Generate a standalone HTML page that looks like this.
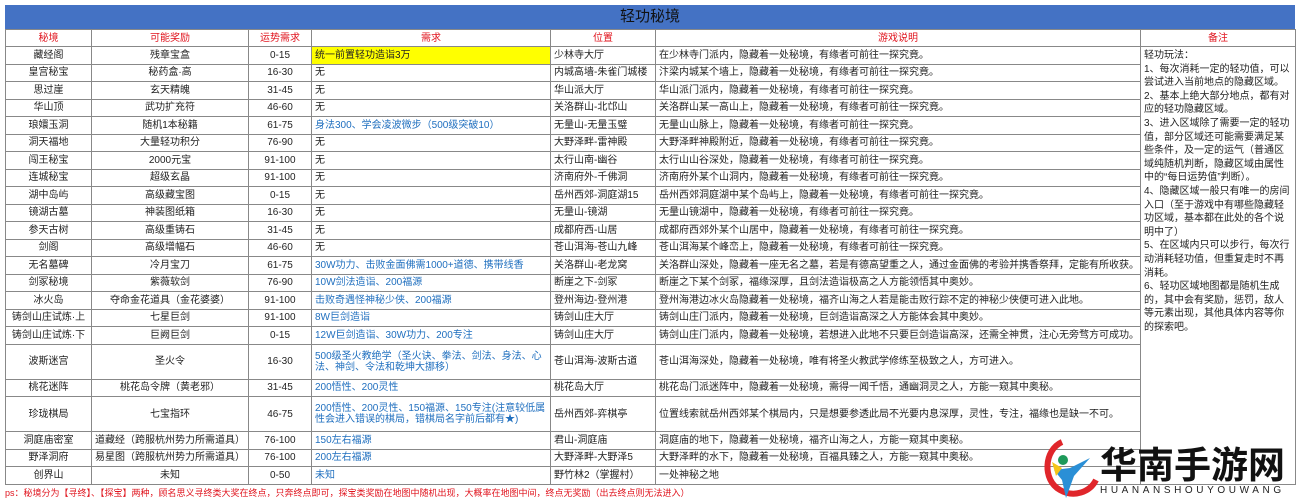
<!DOCTYPE html>
<html><head><meta charset="utf-8"><style>
body{margin:0;width:1299px;height:500px;background:#fff;overflow:hidden;font-family:"Liberation Sans","Noto Sans CJK SC",sans-serif;position:relative}
.title{position:absolute;left:5px;top:5px;width:1290px;height:24px;background:#4472c4;color:#111;font-size:15px;line-height:24px;text-align:center}
table{position:absolute;left:5px;top:29px;border-collapse:collapse;table-layout:fixed;width:1290px;font-size:10px;color:#222}
td{border:1px solid #888;padding:0 3px;height:16.5px;line-height:11px;white-space:nowrap;overflow:hidden}
tr.h td{color:#e0141e;text-align:center;height:16px}
tr.d td{height:34px;white-space:normal}
td.c{text-align:center}
.b{color:#1f6fbf}
.y{background:#ffff00}
td.n{vertical-align:top;white-space:normal;line-height:13.6px;padding:2px 3px;background:#fff}
.ps{position:absolute;left:5px;top:486px;font-size:9px;color:#e0141e}
.logo{position:absolute;left:1100px;top:440px;font-size:37px;font-weight:bold;color:#111;white-space:nowrap;font-family:"Noto Sans CJK SC",sans-serif;line-height:44px}
.en{position:absolute;left:1100px;top:485px;font-size:10px;letter-spacing:3.6px;color:#222;white-space:nowrap}
</style></head><body>
<div class="title">轻功秘境</div>
<table>
<colgroup><col style="width:86px"><col style="width:157px"><col style="width:63px"><col style="width:239px"><col style="width:105px"><col style="width:485px"><col style="width:155px"></colgroup>
<tr class="h"><td>秘境</td><td>可能奖励</td><td>运势需求</td><td>需求</td><td>位置</td><td>游戏说明</td><td>备注</td></tr>
<tr><td class="c">藏经阁</td><td class="c">残章宝盒</td><td class="c">0-15</td><td class="y">统一前置轻功造诣3万</td><td>少林寺大厅</td><td>在少林寺门派内，隐藏着一处秘境，有缘者可前往一探究竟。</td>
<td class="n" rowspan="24">轻功玩法：<br>1、每次消耗一定的轻功值，可以尝试进入当前地点的隐藏区域。<br>2、基本上绝大部分地点，都有对应的轻功隐藏区域。<br>3、进入区域除了需要一定的轻功值，部分区域还可能需要满足某些条件，及一定的运气（普通区域纯随机判断，隐藏区域由属性中的“每日运势值”判断）。<br>4、隐藏区域一般只有唯一的房间入口（至于游戏中有哪些隐藏轻功区域，基本都在此处的各个说明中了）<br>5、在区域内只可以步行，每次行动消耗轻功值，但重复走时不再消耗。<br>6、轻功区域地图都是随机生成的，其中会有奖励，惩罚，敌人等元素出现，其他具体内容等你的探索吧。</td></tr>
<tr><td class="c">皇宫秘宝</td><td class="c">秘药盒·高</td><td class="c">16-30</td><td>无</td><td>内城高墙-朱雀门城楼</td><td>汴梁内城某个墙上，隐藏着一处秘境，有缘者可前往一探究竟。</td></tr>
<tr><td class="c">思过崖</td><td class="c">玄天精魄</td><td class="c">31-45</td><td>无</td><td>华山派大厅</td><td>华山派门派内，隐藏着一处秘境，有缘者可前往一探究竟。</td></tr>
<tr><td class="c">华山顶</td><td class="c">武功扩充符</td><td class="c">46-60</td><td>无</td><td>关洛群山-北邙山</td><td>关洛群山某一高山上，隐藏着一处秘境，有缘者可前往一探究竟。</td></tr>
<tr><td class="c">琅嬛玉洞</td><td class="c">随机1本秘籍</td><td class="c">61-75</td><td class="b">身法300、学会凌波微步（500级突破10）</td><td>无量山-无量玉璧</td><td>无量山山脉上，隐藏着一处秘境，有缘者可前往一探究竟。</td></tr>
<tr><td class="c">洞天福地</td><td class="c">大量轻功积分</td><td class="c">76-90</td><td>无</td><td>大野泽畔-雷神殿</td><td>大野泽畔神殿附近，隐藏着一处秘境，有缘者可前往一探究竟。</td></tr>
<tr><td class="c">闯王秘宝</td><td class="c">2000元宝</td><td class="c">91-100</td><td>无</td><td>太行山南-幽谷</td><td>太行山山谷深处，隐藏着一处秘境，有缘者可前往一探究竟。</td></tr>
<tr><td class="c">连城秘宝</td><td class="c">超级玄晶</td><td class="c">91-100</td><td>无</td><td>济南府外-千佛洞</td><td>济南府外某个山洞内，隐藏着一处秘境，有缘者可前往一探究竟。</td></tr>
<tr><td class="c">湖中岛屿</td><td class="c">高级藏宝图</td><td class="c">0-15</td><td>无</td><td>岳州西郊-洞庭湖15</td><td>岳州西郊洞庭湖中某个岛屿上，隐藏着一处秘境，有缘者可前往一探究竟。</td></tr>
<tr><td class="c">镜湖古墓</td><td class="c">神装图纸箱</td><td class="c">16-30</td><td>无</td><td>无量山-镜湖</td><td>无量山镜湖中，隐藏着一处秘境，有缘者可前往一探究竟。</td></tr>
<tr><td class="c">参天古树</td><td class="c">高级重铸石</td><td class="c">31-45</td><td>无</td><td>成都府西-山居</td><td>成都府西郊外某个山居中，隐藏着一处秘境，有缘者可前往一探究竟。</td></tr>
<tr><td class="c">剑阁</td><td class="c">高级增幅石</td><td class="c">46-60</td><td>无</td><td>苍山洱海-苍山九峰</td><td>苍山洱海某个峰峦上，隐藏着一处秘境，有缘者可前往一探究竟。</td></tr>
<tr><td class="c">无名墓碑</td><td class="c">冷月宝刀</td><td class="c">61-75</td><td class="b">30W功力、击败金面佛需1000+道德、携带线香</td><td>关洛群山-老龙窝</td><td>关洛群山深处，隐藏着一座无名之墓，若是有德高望重之人，通过金面佛的考验并携香祭拜，定能有所收获。</td></tr>
<tr><td class="c">剑冢秘境</td><td class="c">紫薇软剑</td><td class="c">76-90</td><td class="b">10W剑法造诣、200福源</td><td>断崖之下-剑冢</td><td>断崖之下某个剑冢，福缘深厚，且剑法造诣极高之人方能领悟其中奥妙。</td></tr>
<tr><td class="c">冰火岛</td><td class="c">夺命金花道具（金花婆婆）</td><td class="c">91-100</td><td class="b">击败奇遇怪神秘少侠、200福源</td><td>登州海边-登州港</td><td>登州海港边冰火岛隐藏着一处秘境，福齐山海之人若是能击败行踪不定的神秘少侠便可进入此地。</td></tr>
<tr><td class="c">铸剑山庄试炼·上</td><td class="c">七星巨剑</td><td class="c">91-100</td><td class="b">8W巨剑造诣</td><td>铸剑山庄大厅</td><td>铸剑山庄门派内，隐藏着一处秘境，巨剑造诣高深之人方能体会其中奥妙。</td></tr>
<tr><td class="c">铸剑山庄试炼·下</td><td class="c">巨阙巨剑</td><td class="c">0-15</td><td class="b">12W巨剑造诣、30W功力、200专注</td><td>铸剑山庄大厅</td><td>铸剑山庄门派内，隐藏着一处秘境，若想进入此地不只要巨剑造诣高深，还需全神贯，注心无旁骛方可成功。</td></tr>
<tr class="d"><td class="c">波斯迷宫</td><td class="c">圣火令</td><td class="c">16-30</td><td class="b">500级圣火教绝学（圣火诀、拳法、剑法、身法、心法、神剑、令法和乾坤大挪移）</td><td>苍山洱海-波斯古道</td><td>苍山洱海深处，隐藏着一处秘境，唯有将圣火教武学修练至极致之人，方可进入。</td></tr>
<tr><td class="c">桃花迷阵</td><td class="c">桃花岛令牌（黄老邪）</td><td class="c">31-45</td><td class="b">200悟性、200灵性</td><td>桃花岛大厅</td><td>桃花岛门派迷阵中，隐藏着一处秘境，需得一闻千悟，通幽洞灵之人，方能一窥其中奥秘。</td></tr>
<tr class="d"><td class="c">珍珑棋局</td><td class="c">七宝指环</td><td class="c">46-75</td><td class="b">200悟性、200灵性、150福源、150专注(注意较低属性会进入错误的棋局，错棋局名字前后都有★)</td><td>岳州西郊-弈棋亭</td><td>位置线索就岳州西郊某个棋局内，只是想要参透此局不光要内息深厚，灵性，专注，福缘也是缺一不可。</td></tr>
<tr><td class="c">洞庭庙密室</td><td>道藏经（跨服杭州势力所需道具）</td><td class="c">76-100</td><td class="b">150左右福源</td><td>君山-洞庭庙</td><td>洞庭庙的地下，隐藏着一处秘境，福齐山海之人，方能一窥其中奥秘。</td></tr>
<tr><td class="c">野泽洞府</td><td>易星图（跨服杭州势力所需道具）</td><td class="c">76-100</td><td class="b">200左右福源</td><td>大野泽畔-大野泽5</td><td>大野泽畔的水下，隐藏着一处秘境，百福具臻之人，方能一窥其中奥秘。</td></tr>
<tr><td class="c">创界山</td><td class="c">未知</td><td class="c">0-50</td><td class="b">未知</td><td>野竹林2（掌握村）</td><td>一处神秘之地</td></tr>
</table>
<div class="ps">ps：秘境分为【寻终】、【探宝】两种，顾名思义寻终类大奖在终点，只奔终点即可，探宝类奖励在地图中随机出现，大概率在地图中间，终点无奖励（出去终点则无法进入）</div>
<svg style="position:absolute;left:1040px;top:436px" width="60" height="64" viewBox="0 0 60 64">
<path d="M22 6 C4 14 2 44 20 54 C34 62 50 56 56 44" fill="none" stroke="#e0262b" stroke-width="6"/>
<circle cx="23" cy="24" r="5" fill="#1e9a5a"/>
<path d="M14 34 L30 32 L50 22 L34 40 L26 62 L22 44 Z" fill="#2a8fd6"/>
<path d="M12 26 L22 32 L16 40 Z" fill="#f5c518"/>
</svg>
<div class="logo">华南手游网</div>
<div class="en">HUANANSHOUYOUWANG</div>
</body></html>
